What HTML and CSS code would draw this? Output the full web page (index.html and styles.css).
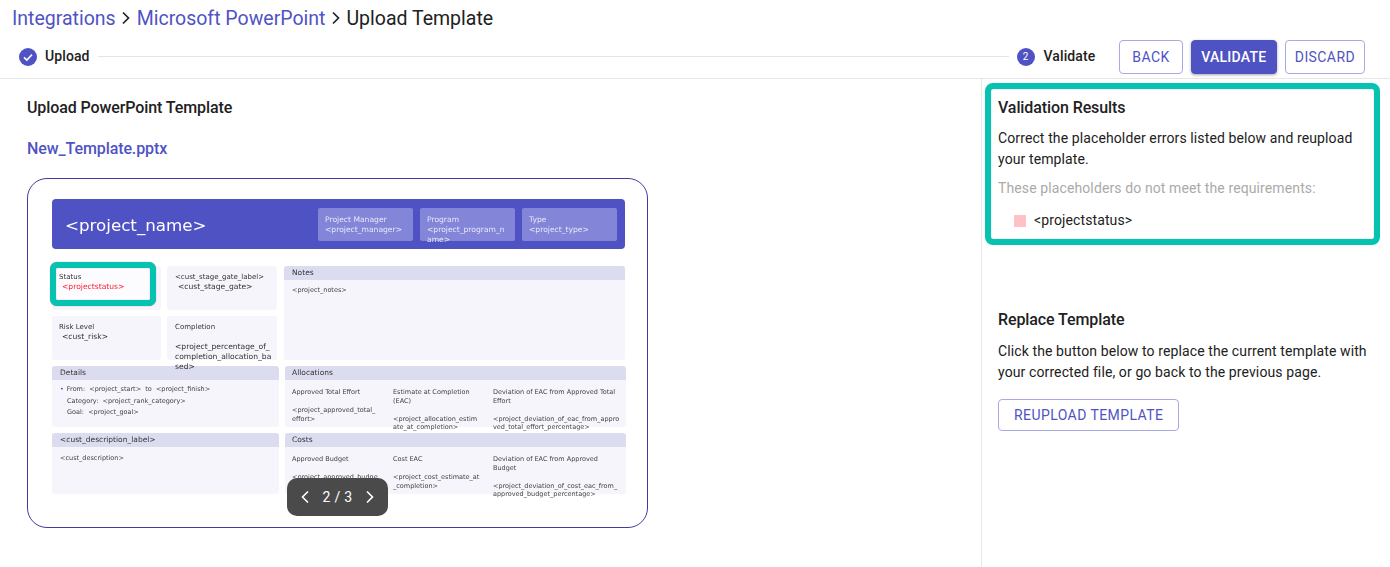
FILE: index.html
```html
<!DOCTYPE html>
<html lang="en">
<head>
<meta charset="utf-8">
<title>Upload Template</title>
<link rel="stylesheet" href="styles.css">
</head>
<body>
<nav class="crumbs">
  <a class="crumb-link">Integrations</a>
  <svg class="crumb-sep" viewBox="0 0 10 14"><path d="M2 1.5 7.5 7 2 12.5" fill="none" stroke="#222" stroke-width="1.7"/></svg>
  <a class="crumb-link">Microsoft PowerPoint</a>
  <svg class="crumb-sep" viewBox="0 0 10 14"><path d="M2 1.5 7.5 7 2 12.5" fill="none" stroke="#222" stroke-width="1.7"/></svg>
  <span class="crumb-current">Upload Template</span>
</nav>
<header class="stepper">
  <svg class="step-check" viewBox="0 0 18 18"><circle cx="9" cy="9" r="9" fill="#4f52c2"/><path d="M5 9.3 7.8 12 13 6.6" fill="none" stroke="#fff" stroke-width="1.6"/></svg>
  <span class="step-label">Upload</span>
  <span class="step-line"></span>
  <span class="step-num">2</span>
  <span class="step-label">Validate</span>
  <div class="actions">
    <button class="btn">BACK</button>
    <button class="btn btn-primary">VALIDATE</button>
    <button class="btn btn-tight">DISCARD</button>
  </div>
</header>
<main class="layout">
  <section class="left">
    <h2 class="heading">Upload PowerPoint Template</h2>
    <a class="file-link">New_Template.pptx</a>
    <div class="preview">
      <div class="slide-head">
        <div class="slide-title">&lt;project_name&gt;</div>
        <div class="chips">
          <div class="chip">Project Manager<br>&lt;project_manager&gt;</div>
          <div class="chip">Program<br>&lt;project_program_n<br>ame&gt;</div>
          <div class="chip">Type<br>&lt;project_type&gt;</div>
        </div>
      </div>
      <div class="slide-top">
        <div class="mini-grid">
          <div class="mini status-card">
            <div>Status</div><div class="val err">&lt;projectstatus&gt;</div>
            <span class="highlight"></span>
          </div>
          <div class="mini"><div>&lt;cust_stage_gate_label&gt;</div><div class="val">&lt;cust_stage_gate&gt;</div></div>
          <div class="mini"><div>Risk Level</div><div class="val">&lt;cust_risk&gt;</div></div>
          <div class="mini"><div>Completion</div><div class="val-block">&lt;project_percentage_of_<br>completion_allocation_ba<br>sed&gt;</div></div>
        </div>
        <div class="panel">
          <div class="panel-head">Notes</div>
          <div class="panel-body">&lt;project_notes&gt;</div>
        </div>
      </div>
      <div class="slide-row">
        <div class="panel">
          <div class="panel-head">Details</div>
          <div class="panel-body details">
            <div><span class="dot">•</span>From:&nbsp; &lt;project_start&gt;&nbsp; to&nbsp; &lt;project_finish&gt;</div>
            <div class="indent">Category:&nbsp; &lt;project_rank_category&gt;</div>
            <div class="indent">Goal:&nbsp; &lt;project_goal&gt;</div>
          </div>
        </div>
        <div class="panel">
          <div class="panel-head head-tight">Allocations</div>
          <div class="panel-body cols">
            <div><div>Approved Total Effort</div><div class="num">&lt;project_approved_total_<br>effort&gt;</div></div>
            <div><div>Estimate at Completion<br>(EAC)</div><div class="num">&lt;project_allocation_estim<br>ate_at_completion&gt;</div></div>
            <div><div>Deviation of EAC from Approved Total<br>Effort</div><div class="num">&lt;project_deviation_of_eac_from_appro<br>ved_total_effort_percentage&gt;</div></div>
          </div>
        </div>
      </div>
      <div class="slide-row">
        <div class="panel">
          <div class="panel-head">&lt;cust_description_label&gt;</div>
          <div class="panel-body desc">&lt;cust_description&gt;</div>
        </div>
        <div class="panel">
          <div class="panel-head head-tight">Costs</div>
          <div class="panel-body cols">
            <div><div>Approved Budget</div><div class="num">&lt;project_approved_budge<br>t&gt;</div></div>
            <div><div>Cost EAC</div><div class="num">&lt;project_cost_estimate_at<br>_completion&gt;</div></div>
            <div><div>Deviation of EAC from Approved<br>Budget</div><div class="num">&lt;project_deviation_of_cost_eac_from_<br>approved_budget_percentage&gt;</div></div>
          </div>
        </div>
      </div>
      <div class="pager">
        <svg class="pager-icon" viewBox="0 0 10 14"><path d="M8 1.5 2.5 7 8 12.5" fill="none" stroke="#fff" stroke-width="1.6"/></svg>
        <span>2 / 3</span>
        <svg class="pager-icon" viewBox="0 0 10 14"><path d="M2 1.5 7.5 7 2 12.5" fill="none" stroke="#fff" stroke-width="1.6"/></svg>
      </div>
    </div>
  </section>
  <aside class="right">
    <div class="results">
      <h2 class="heading">Validation Results</h2>
      <p class="para first">Correct the placeholder errors listed below and reupload your template.</p>
      <p class="para muted">These placeholders do not meet the requirements:</p>
      <div class="error-item"><span class="swatch"></span>&lt;projectstatus&gt;</div>
    </div>
    <div class="replace">
      <h2 class="heading">Replace Template</h2>
      <p class="para first">Click the button below to replace the current template with your corrected file, or go back to the previous page.</p>
      <button class="btn btn-wide">REUPLOAD TEMPLATE</button>
    </div>
  </aside>
</main>
</body>
</html>
```
FILE: styles.css
```css
* { box-sizing: border-box; }
html, body { margin: 0; height: 567px; overflow: hidden; background: #fff; }
body { font-family: Roboto, "Liberation Sans", sans-serif; color: #212121; font-size: 14px; }

.crumbs { display: flex; align-items: center; height: 36px; padding-left: 12px; font-size: 19.5px; }
.crumb-link { color: #5053c3; }
.crumb-current { color: #212121; }
.crumb-sep { width: 10px; height: 14px; margin: 0 5.5px; }

.stepper { display: flex; align-items: center; height: 43px; padding: 0 25px 1px 19px; border-bottom: 1px solid #e6e6e6; }
.step-check { width: 18px; height: 18px; flex: none; margin-right: 8px; }
.step-label { font-weight: 500; font-size: 14px; letter-spacing: 0.1px; padding-bottom: 2px; }
.step-line { flex: 1; height: 1px; background: #e4e4e4; margin: 0 8px; }
.step-num { width: 18px; height: 18px; flex: none; border-radius: 50%; background: #4f52c2; color: #fff; font-size: 10px; display: flex; align-items: center; justify-content: center; margin-right: 9px; }
.actions { display: flex; gap: 8px; margin-left: 24px; }

.btn { height: 34px; padding: 0 12px; background: #fff; border: 1px solid #a8a9e2; border-radius: 4px; color: #5053c3; font: 400 14px Roboto, sans-serif; letter-spacing: 0.4px; }
.btn-tight { padding: 0 9px; }
.btn-primary { background: #4f52c2; border-color: #4f52c2; color: #fff; font-weight: 500; box-shadow: 0 1px 3px rgba(0,0,0,.35); padding: 0 9.5px; letter-spacing: 0.25px; }
.btn-wide { height: 32px; padding: 0 15px; margin-top: 16px; letter-spacing: 0.42px; }

.layout { display: flex; height: 488px; }
.left { width: 982px; flex: none; border-right: 1px solid #e6e6e6; padding: 18px 0 0 27px; }
.heading { margin: 0; font-size: 16px; font-weight: 500; line-height: 21px; color: #212121; letter-spacing: -0.1px; }
.file-link { display: block; margin-top: 20px; font-size: 16px; font-weight: 500; line-height: 21px; color: #5053c3; letter-spacing: -0.1px; }

.preview { position: relative; margin-top: 19px; width: 621px; height: 350px; border: 1px solid #3f3c9e; border-radius: 20px; padding: 20px 22px 0 24px; font-family: "DejaVu Sans", sans-serif; font-size: 7px; line-height: 8.5px; color: #333; }
.slide-head, .slide-top, .slide-row { filter: blur(0.25px); }
.slide-head { display: flex; justify-content: space-between; height: 50px; background: #4f52c2; border-radius: 4px; padding: 9px 8px 0 13px; color: #fff; }
.slide-title { font-size: 16.7px; line-height: 34px; }
.chips { display: flex; gap: 7px; }
.chip { width: 95px; height: 33px; background: #8385d8; border-radius: 2px; padding: 7px 7px 0; line-height: 10px; font-size: 7.6px; color: #e8e8f8; }

.slide-top { position: relative; z-index: 1; display: grid; grid-template-columns: 226px 341px; gap: 6px; margin-top: 17px; height: 94px; }
.mini-grid { display: grid; grid-template-columns: 109px 110px; grid-template-rows: 44px 44px; gap: 6px; }
.mini { background: #f5f5fb; border-radius: 3px; padding: 6px 7px; line-height: 10px; }
.mini:nth-child(even) { padding-left: 8px; }
.val { font-size: 7.6px; margin-left: 3px; }
.err { color: #ff1f2f; }
.val-block { font-size: 7.6px; margin-top: 10px; }
.status-card { position: relative; }
.status-card > div { position: relative; z-index: 1; }
.highlight { position: absolute; left: -2px; top: -4px; width: 106px; height: 44px; background: #fcfcff; border: 6px solid #05c3b0; border-radius: 7px; box-shadow: 0 0 1px rgba(0,0,0,.5), inset 0 0 1px rgba(0,0,0,.5); }

.panel { background: #f5f5fb; border-radius: 3px; min-width: 0; }
.panel-head { height: 14px; background: #dcdcf1; border-radius: 3px 3px 0 0; padding: 0 8px; font-size: 7.5px; line-height: 14px; }
.head-tight { padding-left: 7px; }
.panel-body { padding: 6px 8px; font-size: 6.5px; color: #444; }
.desc { padding-top: 7px; }
.slide-row { display: grid; grid-template-columns: 227px 341px; grid-auto-rows: 61px; gap: 6px; height: 61px; margin-top: 6px; }
.details { line-height: 11.5px; padding-top: 4px; }
.dot { color: #4f52c2; margin-right: 3px; }
.indent { margin-left: 7px; }
.cols { display: grid; grid-template-columns: 101px 100px 130px; padding: 8px 0 0 7px; }
.num { margin-top: 9.5px; }

.pager { position: absolute; z-index: 2; left: 259px; top: 299px; width: 101px; height: 38px; background: #4a4a4a; border-radius: 10px; display: flex; align-items: center; justify-content: space-between; padding: 0 13px; color: #fff; font: 400 14px Roboto, sans-serif; letter-spacing: 0.3px; }
.pager-icon { width: 10px; height: 14px; }

.right { flex: 1; min-width: 0; padding: 4px 10px 0 3px; }
.results { height: 162px; border: 6px solid #05c3b0; border-radius: 8px; padding: 8px 7px 0; box-shadow: inset 0 0 1px rgba(0,0,0,.4); }
.para { margin: 0; font-size: 14px; line-height: 21px; letter-spacing: 0.11px; }
.para.first { margin-top: 10px; }
.muted { color: #aaa; margin-top: 8px; }
.error-item { display: flex; align-items: center; margin: 11px 0 0 16px; font-size: 14px; line-height: 21px; letter-spacing: 0.11px; }
.swatch { width: 12px; height: 12px; background: #ffc0c6; margin-right: 8px; }
.replace { padding: 64px 5px 0 13px; }
.replace .para.first { margin-top: 11px; }
```
